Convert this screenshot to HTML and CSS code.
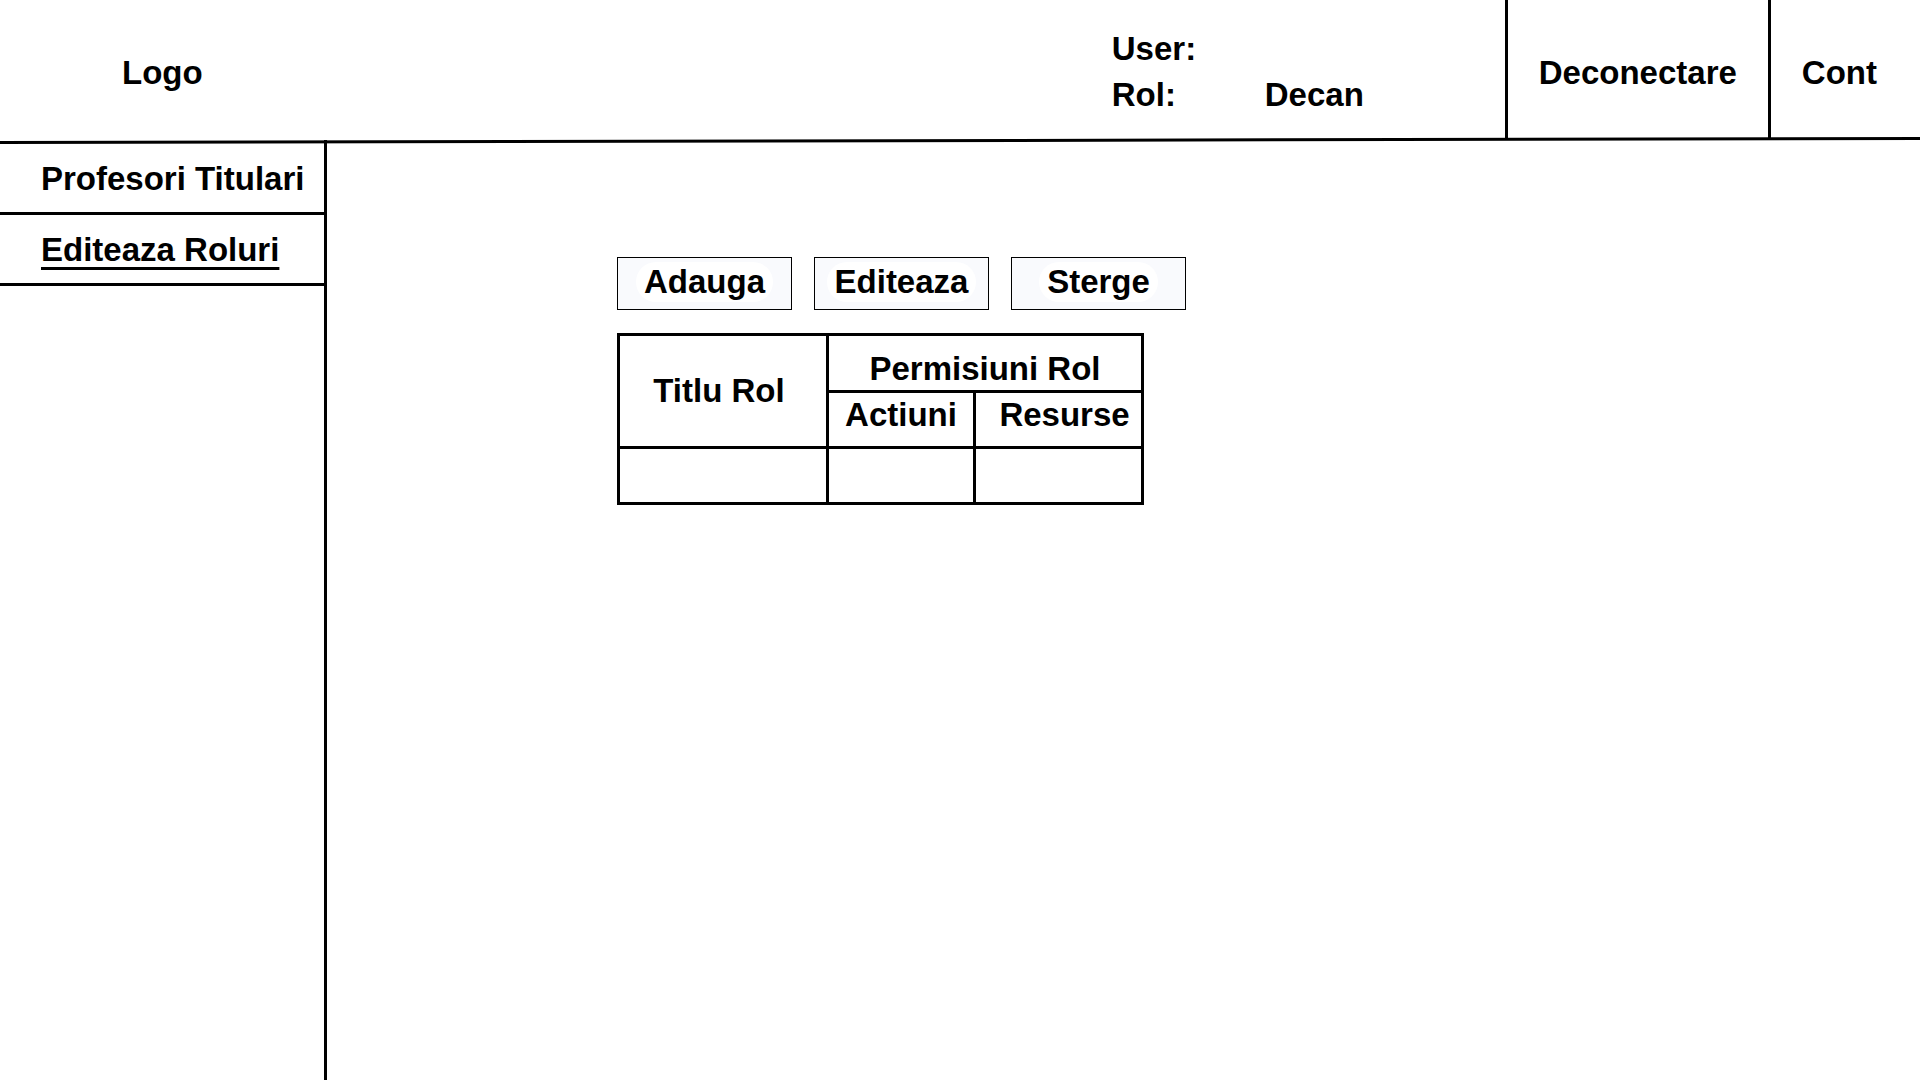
FILE: index.html
```html
<!DOCTYPE html>
<html lang="ro">
<head>
  <meta charset="utf-8">
  <meta name="viewport" content="width=device-width, initial-scale=1">
  <title>Editeaza Roluri</title>
  <link rel="stylesheet" href="styles.css">
</head>
<body>
  <header class="header">
    <div class="bar">
      <a class="logo" href="#">Logo</a>
      <dl class="user">
        <dt>User:</dt>
        <dd></dd>
        <dt>Rol:</dt>
        <dd>Decan</dd>
      </dl>
      <button class="bar-button" type="button">Deconectare</button>
      <button class="bar-button bar-button-last" type="button">Cont</button>
    </div>
    <svg class="rule" viewBox="0 0 1920 7" preserveAspectRatio="none" aria-hidden="true">
      <path d="M0 5.5 L1920 1.5" stroke="#000" stroke-width="3"/>
    </svg>
  </header>
  <div class="layout">
    <nav class="sidebar">
      <a class="nav-item" href="#">Profesori Titulari</a>
      <a class="nav-item nav-item-active" href="#" aria-current="page">Editeaza Roluri</a>
    </nav>
    <main class="main">
      <div class="actions">
        <button class="action" type="button"><span class="action-label">Adauga</span></button>
        <button class="action" type="button"><span class="action-label">Editeaza</span></button>
        <button class="action" type="button"><span class="action-label">Sterge</span></button>
      </div>
      <table class="roles">
        <colgroup>
          <col class="col-title">
          <col class="col-actions">
          <col class="col-resources">
        </colgroup>
        <thead>
          <tr>
            <th class="title" rowspan="2" scope="col">Titlu Rol</th>
            <th class="group" colspan="2" scope="colgroup">Permisiuni Rol</th>
          </tr>
          <tr>
            <th class="sub" scope="col">Actiuni</th>
            <th class="sub sub-resources" scope="col">Resurse</th>
          </tr>
        </thead>
        <tbody>
          <tr>
            <td></td>
            <td></td>
            <td></td>
          </tr>
        </tbody>
      </table>
    </main>
  </div>
</body>
</html>
```
FILE: styles.css
```css
* {
  box-sizing: border-box;
}

body {
  display: flex;
  flex-direction: column;
  min-height: 100vh;
  margin: 0;
  background: #fff;
  color: #000;
  font: bold 33px/40px "Liberation Sans", Arial, sans-serif;
}

a {
  color: inherit;
  text-decoration: none;
}

button {
  color: inherit;
  font: inherit;
  cursor: pointer;
}

.bar {
  display: flex;
  min-height: 138px;
}

.logo {
  align-self: center;
  margin-right: auto;
  padding: 8px 0 0 122px;
}

.user {
  display: grid;
  grid-template-columns: 153px auto;
  grid-auto-rows: 46px;
  align-content: center;
  width: 393px;
  margin: 0;
  padding-top: 12px;
}

.user dd {
  margin: 0;
}

.bar-button {
  padding: 8px 31px 0;
  border: 0;
  border-left: 3px solid #000;
  background: none;
}

.bar-button-last {
  padding-right: 43px;
}

/* The rule climbs slightly towards the right edge. */
.rule {
  display: block;
  width: 100%;
  height: 7px;
  margin: -1px 0 -4px;
}

.layout {
  display: flex;
  flex: 1;
}

.sidebar {
  flex: none;
  width: 327px;
  padding-top: 4px;
  border-right: 3px solid #000;
}

.nav-item {
  display: block;
  padding: 15px 0 13px 41px;
  border-bottom: 3px solid #000;
  white-space: nowrap;
}

.nav-item-active {
  text-decoration: underline 3px;
  text-decoration-skip-ink: none;
  text-underline-offset: 6px;
}

.main {
  flex: 1;
  padding: 117px 24px 24px 290px;
}

.actions {
  display: flex;
  gap: 22px;
  margin-bottom: 23px;
}

.action {
  width: 175px;
  height: 53px;
  padding: 0 0 4px;
  border: 1px solid #000;
  background: #f9fafd;
}

.action-label {
  display: inline-block;
  padding: 0 8px;
  border-radius: 20px;
  background: #fff;
}

.roles {
  width: 527px;
  border-collapse: collapse;
  table-layout: fixed;
}

.col-title {
  width: 209px;
}

.col-actions {
  width: 147px;
}

.roles th,
.roles td {
  height: 56px;
  padding: 0;
  border: 3px solid #000;
}

.roles .title {
  padding-right: 8px;
}

.roles .group {
  height: 57px;
  padding-top: 12px;
}

.roles .sub {
  padding-bottom: 10px;
}

.roles .sub-resources {
  padding-left: 12px;
}
```
